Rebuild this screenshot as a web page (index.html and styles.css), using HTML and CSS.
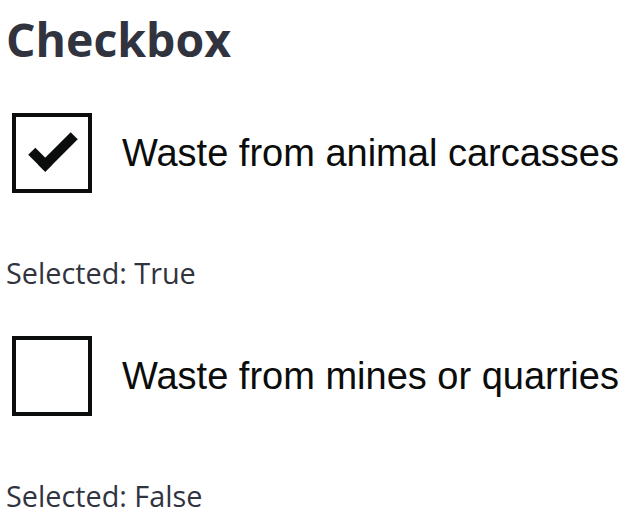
FILE: index.html
```html
<!DOCTYPE html>
<html lang="en">
<head>
<meta charset="utf-8">
<title>Checkbox</title>
<link rel="stylesheet" href="styles.css">
</head>
<body>
<main class="page">
  <h1 class="title">Checkbox</h1>
  <div class="item">
    <span class="box box--checked"></span>
    <span class="label">Waste from animal carcasses</span>
  </div>
  <p class="status">Selected: True</p>
  <div class="item">
    <span class="box"></span>
    <span class="label">Waste from mines or quarries</span>
  </div>
  <p class="status">Selected: False</p>
</main>
</body>
</html>
```
FILE: styles.css
```css
html, body {
  margin: 0;
  padding: 0;
  background: #ffffff;
}

.page {
  padding: 7px 0 0 6px;
  font-family: "Open Sans", "Noto Sans", sans-serif;
  color: rgb(49, 51, 63);
}

.title {
  margin: 0 0 42px 0;
  font-size: 46.4px;
  line-height: 64px;
  font-weight: 700;
}

.item {
  display: flex;
  align-items: center;
  margin-left: 6px;
  height: 80px;
}

.box {
  position: relative;
  flex: 0 0 auto;
  width: 80px;
  height: 80px;
  box-sizing: border-box;
  border: 4px solid #0b0c0c;
  background: #ffffff;
}

.box--checked::after {
  content: "";
  position: absolute;
  box-sizing: border-box;
  top: 18px;
  left: 14px;
  width: 46px;
  height: 24px;
  border: solid #0b0c0c;
  border-width: 0 0 10px 10px;
  transform: rotate(-45deg);
}

.label {
  margin-left: 30px;
  font-family: "Liberation Sans", Arial, sans-serif;
  font-size: 38px;
  line-height: 50px;
  color: #0b0c0c;
  white-space: nowrap;
}

.status {
  margin: 60px 0 43px 0;
  font-size: 28.8px;
  line-height: 40px;
}

.status:last-child {
  margin-bottom: 0;
}
```
